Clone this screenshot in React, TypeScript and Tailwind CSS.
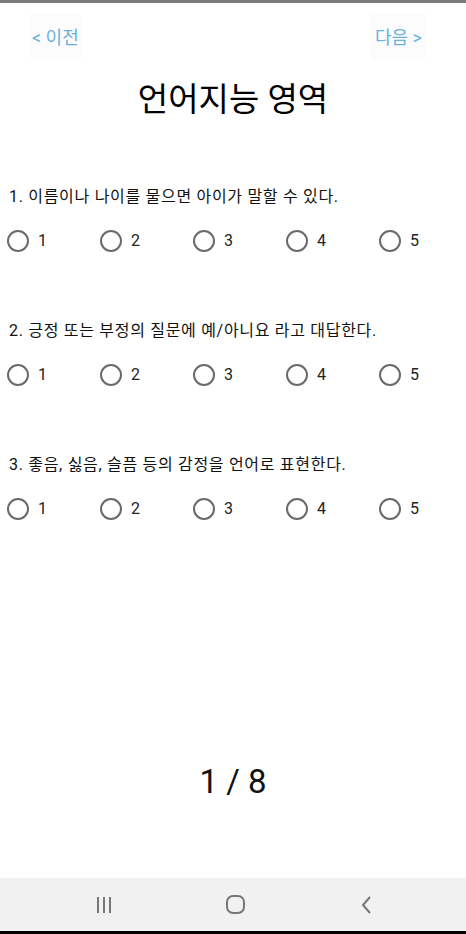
const options = [1, 2, 3, 4, 5];

const questions = [
  '1. 이름이나 나이를 물으면 아이가 말할 수 있다.',
  '2. 긍정 또는 부정의 질문에 예/아니요 라고 대답한다.',
  '3. 좋음, 싫음, 슬픔 등의 감정을 언어로 표현한다.',
];

const Question = ({ text }: { text: string }) => {
  return (
    <div className="flex flex-col">
      <p className="h-[20px] leading-[20px] text-[16px] tracking-[0.7px] text-[#111] pl-[9px]">{text}</p>
      <div className="flex flex-row mt-[22px] h-[24px] pl-[7px]">
        {options.map((n) => (
          <label key={n} className="w-[93px] shrink-0 flex flex-row items-center gap-[9px]">
            <span className="w-[22px] h-[22px] rounded-full border-2 border-[#6a6a6a]" />
            <span className="text-[16px] text-[#222]">{n}</span>
          </label>
        ))}
      </div>
    </div>
  );
};

export default function App() {
  return (
    <div className="w-[466px] h-[934px] overflow-hidden flex flex-col bg-white font-['Roboto','Noto_Sans_CJK_KR',sans-serif]">
      <div className="h-[3px] bg-[#7a7a7a]" />

      {/* header buttons */}
      <div className="h-[68px] flex flex-row items-center justify-between pl-[30px] pr-[40px]">
        <button className="h-[46px] px-[2px] bg-[#fcfcfc] text-[18px] text-[#6ab0dc]">&lt; 이전</button>
        <button className="h-[46px] px-[4px] bg-[#fcfcfc] text-[18px] text-[#6ab0dc]">다음 &gt;</button>
      </div>

      <h1 className="h-[58px] leading-[58px] text-center text-[33px] text-black">언어지능 영역</h1>

      <div className="flex flex-col gap-[68px] mt-[58px]">
        {questions.map((q) => (
          <Question key={q} text={q} />
        ))}
      </div>

      <div className="flex-1" />

      <p className="h-[40px] leading-[40px] text-center text-[33px] text-[#111] mb-[76px]">1 / 8</p>

      {/* android nav bar */}
      <div className="h-[53px] bg-[#f1f1f1] flex flex-row items-center pl-[97px] gap-[115px]">
        <div className="flex flex-row gap-[4px] h-[16px]">
          <span className="w-[2px] h-full bg-[#777]" />
          <span className="w-[2px] h-full bg-[#777]" />
          <span className="w-[2px] h-full bg-[#777]" />
        </div>
        <div className="w-[19px] h-[19px] rounded-[7px] border-2 border-[#777]" />
        <svg width="12" height="20" viewBox="0 0 12 20">
          <path d="M10 2 L3 10 L10 18" fill="none" stroke="#777" strokeWidth="2" />
        </svg>
      </div>
      <div className="h-[3px] bg-black" />
    </div>
  );
}
